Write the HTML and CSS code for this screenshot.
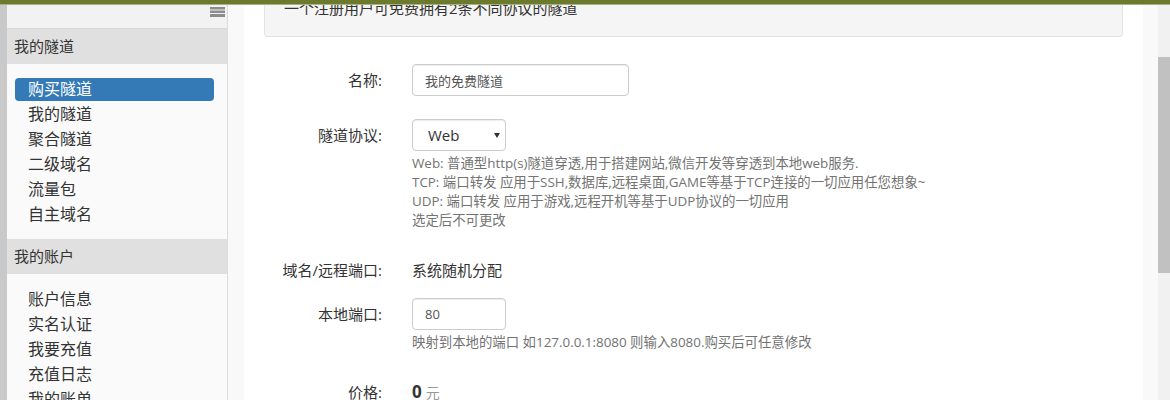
FILE: index.html
```html
<!DOCTYPE html>
<html lang="zh-CN">
<head>
  <meta charset="UTF-8">
  <title>购买隧道</title>
  <link rel="stylesheet" href="styles.css">
</head>
<body>
  <div class="topbar"></div>
  <div class="page">
    <!-- Left Menu -->
    <aside class="sidebar">
      <div class="side-top">
        <svg class="menu-icon" width="15" height="10" viewBox="0 0 15 10">
          <rect x="0" y="0" width="15" height="2.5" fill="#8c8c8c"/>
          <rect x="0" y="3.5" width="15" height="2.5" fill="#8c8c8c"/>
          <rect x="0" y="7" width="15" height="3" fill="#8c8c8c"/>
        </svg>
      </div>
      <div class="side-head">我的隧道</div>
      <ul class="side-list">
        <li><a class="active" href="#">购买隧道</a></li>
        <li><a href="#">我的隧道</a></li>
        <li><a href="#">聚合隧道</a></li>
        <li><a href="#">二级域名</a></li>
        <li><a href="#">流量包</a></li>
        <li><a href="#">自主域名</a></li>
      </ul>
      <div class="side-head">我的账户</div>
      <ul class="side-list">
        <li><a href="#">账户信息</a></li>
        <li><a href="#">实名认证</a></li>
        <li><a href="#">我要充值</a></li>
        <li><a href="#">充值日志</a></li>
        <li><a href="#">我的账单</a></li>
      </ul>
    </aside>

    <!-- Main Panel -->
    <main class="main">
      <div class="well">一个注册用户可免费拥有2条不同协议的隧道</div>

      <form class="form">
        <div class="row row-name">
          <label class="label" for="name">名称:</label>
          <div class="control">
            <input class="input input-name" type="text" id="name" value="我的免费隧道">
          </div>
        </div>

        <div class="row row-help">
          <label class="label" for="proto">隧道协议:</label>
          <div class="control">
            <div class="select-wrap">
              <select class="input select" id="proto">
                <option>Web</option>
                <option>TCP</option>
                <option>UDP</option>
              </select>
              <svg class="caret" width="6" height="5" viewBox="0 0 6 5"><path d="M0 0 H6 L3 5 Z" fill="#333"/></svg>
            </div>
            <p class="help">
              Web: 普通型http(s)隧道穿透,用于搭建网站,微信开发等穿透到本地web服务.<br>
              TCP: 端口转发 应用于SSH,数据库,远程桌面,GAME等基于TCP连接的一切应用任您想象~<br>
              UDP: 端口转发 应用于游戏,远程开机等基于UDP协议的一切应用<br>
              选定后不可更改
            </p>
          </div>
        </div>

        <div class="row row-static">
          <span class="label">域名/远程端口:</span>
          <div class="control static">系统随机分配</div>
        </div>

        <div class="row row-help">
          <label class="label" for="port">本地端口:</label>
          <div class="control">
            <input class="input input-port" type="text" id="port" value="80">
            <p class="help">映射到本地的端口 如127.0.0.1:8080 则输入8080.购买后可任意修改</p>
          </div>
        </div>

        <div class="row">
          <span class="label">价格:</span>
          <div class="control static"><b class="price">0</b> <span class="unit">元</span></div>
        </div>
      </form>
    </main>

    <div class="scrollbar"><div class="thumb"></div></div>
  </div>
</body>
</html>
```

FILE: styles.css
```css
/* Reset */
* {
  margin: 0;
  padding: 0;
  box-sizing: border-box;
}

body {
  height: 400px;
  overflow: hidden;
  font-family: "Open Sans", "Noto Sans CJK SC", sans-serif;
  color: #333;
  background: #f9f9f9;
}

/* Fixed top bar */
.topbar {
  position: fixed;
  top: 0;
  left: 0;
  right: 0;
  height: 5px;
  background: #6b7a2c;
  border-bottom: 1px solid #a9b27a;
  z-index: 10;
}

.page {
  display: flex;
  height: 400px;
}

/* Sidebar */
.sidebar {
  width: 228px;
  flex-shrink: 0;
  background: #fafafa;
  border-left: 7px solid #c9c9c9;
  border-right: 1px solid #dcdcdc;
}

.side-top {
  height: 29px;
  background: #f2f2f2;
  border-bottom: 1px solid #d9d9d9;
  display: flex;
  justify-content: flex-end;
  padding: 7px 2px 0 0;
}

.side-head {
  height: 35px;
  line-height: 35px;
  padding-left: 7px;
  font-size: 15px;
  background: #e0e0e0;
}

.side-list {
  list-style: none;
  padding: 12.5px 0;
}

.side-list li {
  height: 25px;
  padding: 1px 13px 1px 8px;
}

.side-list a {
  display: block;
  height: 23px;
  line-height: 23px;
  padding-left: 13px;
  font-size: 16px;
  color: #333;
  text-decoration: none;
  border-radius: 4px;
}

.side-list a.active {
  background: #337ab7;
  color: #fff;
}

/* Main panel */
.main {
  width: 899px;
  flex-shrink: 0;
  margin-left: 16px;
  background: #fff;
  padding: 0 20px;
}

.well {
  height: 37px;
  padding: 0 19px;
  line-height: 17px;
  font-size: 15px;
  background: #f5f5f5;
  border: 1px solid #e3e3e3;
  border-top: none;
  border-radius: 0 0 4px 4px;
}

/* Form */
.form {
  padding-top: 27px;
}

.row {
  display: grid;
  grid-template-columns: 118px 1fr;
  column-gap: 30px;
  margin-bottom: 23px;
}

.row-help {
  margin-bottom: 24.5px;
}

.row-static {
  margin-bottom: 12px;
}

.label {
  text-align: right;
  line-height: 32px;
  font-size: 15px;
  color: #333;
}

.static {
  line-height: 32px;
  font-size: 15px;
}

.input {
  height: 32px;
  padding: 0 12px;
  border: 1px solid #ccc;
  border-radius: 4px;
  font-family: inherit;
  font-size: 13px;
  color: #555;
  background: #fff;
  box-shadow: inset 0 1px 1px rgba(0, 0, 0, 0.075);
}

.input-name {
  width: 217px;
}

.input-port {
  width: 94px;
}

.select-wrap {
  position: relative;
  width: 94px;
}

.select {
  width: 94px;
  padding-left: 15px;
  font-size: 15px;
  color: #333;
  appearance: none;
  -webkit-appearance: none;
}

.caret {
  position: absolute;
  top: 14px;
  left: 82px;
  pointer-events: none;
}

.help {
  margin-top: 2.5px;
  font-size: 13.4px;
  line-height: 19px;
  color: #737373;
}

.price {
  font-size: 17px;
  font-weight: bold;
}

.unit {
  font-size: 14px;
  color: #999;
}

/* Scrollbar */
.scrollbar {
  width: 12px;
  margin-left: auto;
  background: #f1f1f1;
  padding-top: 57px;
}

.thumb {
  height: 216px;
  background: #c1c1c1;
}
```
